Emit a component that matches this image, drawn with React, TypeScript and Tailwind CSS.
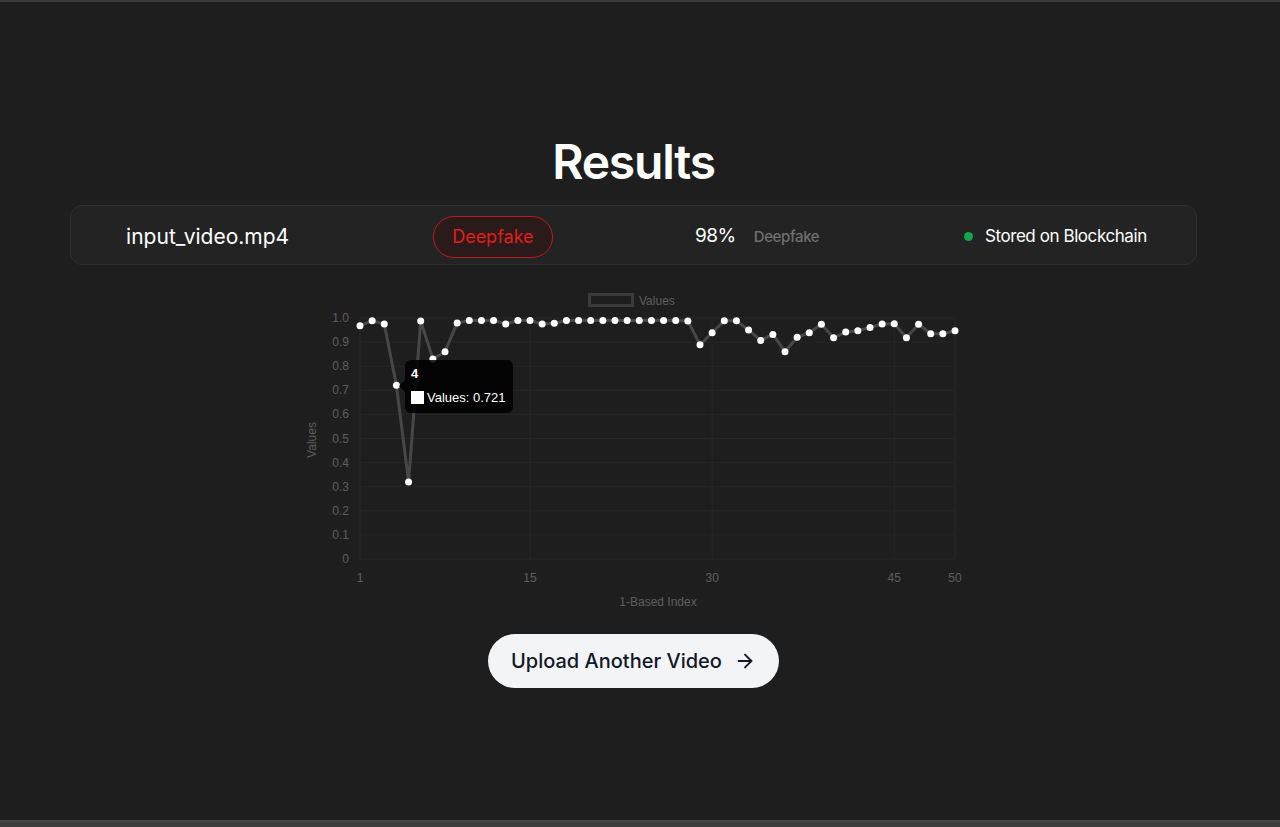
import React from "react";
import {ArrowRight} from "lucide-react";

const VALUES = [
  0.968, 0.989, 0.975, 0.721, 0.32, 0.988, 0.83, 0.86, 0.979, 0.99,
  0.99, 0.99, 0.975, 0.99, 0.99, 0.975, 0.978, 0.99, 0.99, 0.99,
  0.99, 0.99, 0.99, 0.99, 0.99, 0.99, 0.99, 0.988, 0.889, 0.939,
  0.989, 0.989, 0.95, 0.907, 0.932, 0.86, 0.92, 0.939, 0.974, 0.918,
  0.942, 0.947, 0.961, 0.975, 0.976, 0.918, 0.974, 0.935, 0.935, 0.947,
];

// chart area inside the svg
const LEFT = 60;
const RIGHT = 655;
const TOP = 33;
const BOTTOM = 274;

const px = (i: number) => LEFT + ((i - 1) * (RIGHT - LEFT)) / 49;
const py = (v: number) => BOTTOM - v * (BOTTOM - TOP);

function ValuesChart() {
  const line = VALUES.map((v, i) => `${i === 0 ? "M" : "L"}${px(i + 1).toFixed(1)} ${py(v).toFixed(1)}`).join(" ");
  const yTicks = [0, 0.1, 0.2, 0.3, 0.4, 0.5, 0.6, 0.7, 0.8, 0.9, 1.0];
  const xTicks = [1, 15, 30, 45, 50];

  return (
    <svg width={680} height={335} viewBox="0 0 680 335" className="block"
         style={{fontFamily: '"Liberation Sans", Arial, sans-serif'}}>
      {/* legend */}
      <rect x={289.5} y={9.5} width={43} height={11} fill="#1e1e1e" stroke="#3a3a3a" strokeWidth={3}/>
      <text x={339} y={20} fontSize={12} fill="#5e5e5e">Values</text>

      {/* grid */}
      {yTicks.map((t) => (
        <line key={t} x1={LEFT} x2={RIGHT} y1={py(t)} y2={py(t)} stroke="#262626" strokeWidth={1}/>
      ))}
      {xTicks.map((t) => (
        <line key={t} x1={px(t)} x2={px(t)} y1={TOP} y2={BOTTOM} stroke="#262626" strokeWidth={1}/>
      ))}

      {/* ticks */}
      {yTicks.map((t) => (
        <text key={t} x={49} y={py(t) + 4} fontSize={12} fill="#5e5e5e" textAnchor="end">
          {t === 0 ? "0" : t.toFixed(1)}
        </text>
      ))}
      {xTicks.map((t) => (
        <text key={t} x={px(t)} y={297} fontSize={12} fill="#5e5e5e" textAnchor="middle">{t}</text>
      ))}

      {/* axis titles */}
      <text x={358} y={321} fontSize={12} fill="#5e5e5e" textAnchor="middle">1-Based Index</text>
      <text x={0} y={0} fontSize={12} fill="#5e5e5e" textAnchor="middle" transform="translate(16 155) rotate(-90)">Values</text>

      {/* data */}
      <path d={line} fill="none" stroke="#474747" strokeWidth={3} strokeLinejoin="round"/>
      {VALUES.map((v, i) => (
        <circle key={i} cx={px(i + 1)} cy={py(v)} r={3.5} fill="#ffffff"/>
      ))}

      {/* tooltip */}
      <path d="M99 101 L105 95 L105 107 Z" fill="#000" fillOpacity={0.85}/>
      <rect x={105} y={75} width={108} height={53} rx={6} fill="#000" fillOpacity={0.85}/>
      <text x={111} y={93} fontSize={13} fontWeight={700} fill="#fff">4</text>
      <rect x={111.5} y={106.5} width={12} height={12} fill="#fff" stroke="#fff"/>
      <text x={127} y={117} fontSize={13} fill="#fff">Values: 0.721</text>
    </svg>
  );
}

export default function App() {
  return (
    <div className="min-h-[827px] h-[827px] flex flex-col bg-[#1e1e1e] text-white overflow-hidden"
         style={{fontFamily: 'Inter, "Open Sans", sans-serif'}}>
      <div className="h-[2px] bg-[#3a3a3a]"/>
      <main className="flex-1 flex flex-col items-center pt-[131px] pr-[13px]">
        <h1 className="text-[48px] leading-[58px] font-semibold tracking-tight">Results</h1>

        <div className="mt-[14px] w-[1127px] h-[60px] pt-[3px] rounded-xl border border-[#2e2e2e] bg-[#232323] grid grid-cols-4 items-center">
          <div className="flex justify-center">
            <span className="text-[21px] pr-[8px]">input_video.mp4</span>
          </div>
          <div className="flex justify-center">
            <span className="h-[42px] px-[18px] flex items-center rounded-full border border-[#b91c1c] bg-[#2a1a1a] text-[#e11d1d] text-[18px]">
              Deepfake
            </span>
          </div>
          <div className="flex justify-center items-baseline gap-[18px] pr-[34px]">
            <span className="text-[19px] tracking-tight">98%</span>
            <span className="text-[15px] text-[#6f6f6f] font-medium tracking-tight">Deepfake</span>
          </div>
          <div className="flex justify-center items-center gap-[12px]">
            <span className="w-[9px] h-[9px] rounded-full bg-[#16a34a]"/>
            <span className="text-[17px] tracking-tight">Stored on Blockchain</span>
          </div>
        </div>

        <div className="mt-[20px] ml-[13px]">
          <ValuesChart/>
        </div>

        <button className="mt-[14px] h-[54px] px-[23px] rounded-full bg-[#f3f4f6] text-[#111827] flex items-center gap-[12px] text-[20px] font-medium">
          Upload Another Video
          <ArrowRight size={22} strokeWidth={2}/>
        </button>
      </main>
      <div className="h-[7px] bg-[#3c3c3c] border-t-2 border-[#454545]"/>
    </div>
  );
}
